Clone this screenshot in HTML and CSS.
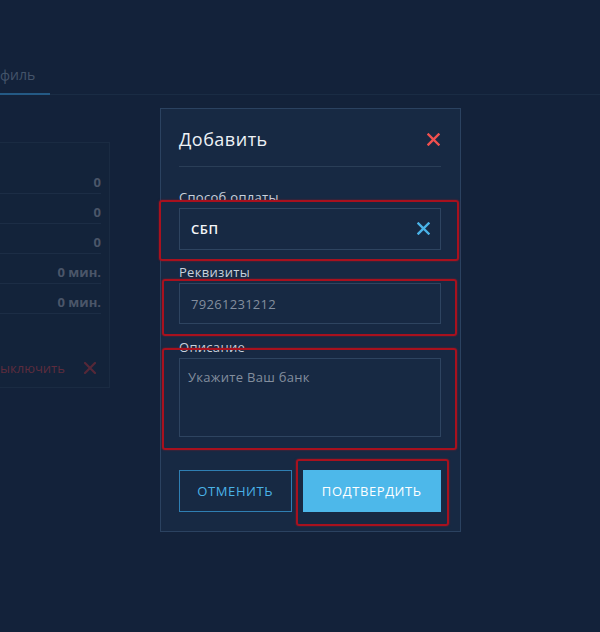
FILE: index.html
```html
<!DOCTYPE html>
<html lang="ru">
<head>
<meta charset="utf-8">
<title>Добавить</title>
<link rel="stylesheet" href="styles.css">
</head>
<body>
<div class="page">
  <div class="tabs">
    <div class="tab active">филь</div>
  </div>
  <div class="panel">
    <div class="row"><span class="val">0</span></div>
    <div class="row"><span class="val">0</span></div>
    <div class="row"><span class="val">0</span></div>
    <div class="row"><span class="val">0 мин.</span></div>
    <div class="row"><span class="val">0 мин.</span></div>
    <div class="off">
      <span class="off-text">ыключить</span>
      <svg class="off-x" width="12" height="12" viewBox="0 0 12 12"><path d="M1 1L11 11M11 1L1 11" stroke="currentColor" stroke-width="2.2" stroke-linecap="square"/></svg>
    </div>
  </div>

  <div class="modal">
    <div class="modal-head">
      <h2 class="modal-title">Добавить</h2>
      <svg class="close" width="13" height="13" viewBox="0 0 13 13"><path d="M1.5 1.5L11.5 11.5M11.5 1.5L1.5 11.5" stroke="currentColor" stroke-width="2.4" stroke-linecap="square"/></svg>
    </div>
    <div class="divider"></div>
    <label class="label first">Способ оплаты</label>
    <div class="input select">
      <span class="value">СБП</span>
      <svg class="clear" width="13" height="13" viewBox="0 0 13 13"><path d="M1.5 1.5L11.5 11.5M11.5 1.5L1.5 11.5" stroke="currentColor" stroke-width="2.4" stroke-linecap="square"/></svg>
    </div>
    <label class="label">Реквизиты</label>
    <div class="input"><span class="muted">79261231212</span></div>
    <label class="label l3">Описание</label>
    <div class="textarea"><span class="muted">Укажите Ваш банк</span></div>
    <div class="actions">
      <button class="btn btn-outline">ОТМЕНИТЬ</button>
      <button class="btn btn-primary">ПОДТВЕРДИТЬ</button>
    </div>

    <div class="hl hl1"></div>
    <div class="hl hl2"></div>
    <div class="hl hl3"></div>
    <div class="hl hl4"></div>
  </div>
</div>
</body>
</html>
```

FILE: styles.css
```css
* { box-sizing: border-box; }
html, body { margin: 0; padding: 0; }
body {
  background: #13223a;
  font-family: "Open Sans", "Noto Sans", sans-serif;
  width: 600px;
  height: 632px;
  overflow: hidden;
}
.page {
  position: relative;
  width: 600px;
  height: 632px;
  background: #13223a;
}
.tabs {
  height: 95px;
  border-bottom: 1px solid #1a2c44;
  display: flex;
  align-items: flex-end;
}
.tab {
  width: 50px;
  height: 30px;
  font-size: 14px;
  color: #44546a;
  border-bottom: 2px solid #245a85;
  line-height: 20px;
  margin-bottom: -1px;
}
.panel {
  margin-top: 47px;
  width: 110px;
  height: 246px;
  border: 1px solid #1a2b42;
  border-left: none;
  background: #13233a;
  padding-top: 21px;
  padding-right: 8px;
}
.row {
  height: 30px;
  border-bottom: 1px solid #1c2d45;
  display: flex;
  justify-content: flex-end;
  align-items: center;
  padding-top: 6px;
  font-size: 13px;
  font-weight: 700;
  color: #4b5669;
}
.off {
  margin-top: 45px;
  display: flex;
  align-items: center;
  justify-content: space-between;
  padding-right: 5px;
}
.off-text { font-size: 13px; color: #5d2c3d; }
.off-x { color: #552838; }

.modal {
  position: absolute;
  left: 160px;
  top: 108px;
  width: 301px;
  height: 424px;
  background: #172943;
  border: 1px solid #2b4260;
  padding: 18px 19px 19px 18px;
  display: flex;
  flex-direction: column;
}
.modal-head {
  display: flex;
  align-items: center;
  justify-content: space-between;
  height: 24px;
  padding-right: 1px;
}
.modal-title {
  margin: 0;
  font-size: 18px;
  font-weight: 500;
  color: #eef2f6;
  letter-spacing: 0.5px;
  line-height: 24px;
}
.close { color: #f0504f; }
.divider {
  margin-top: 15px;
  height: 1px;
  background: #2a3e57;
}
.label {
  display: block;
  margin-top: 14px;
  height: 16px;
  line-height: 16px;
  font-size: 13px;
  color: #c9d1dc;
  letter-spacing: 0.3px;
}
.label.first { margin-top: 22px; }
.input {
  margin-top: 3px;
  height: 42px;
  border: 1px solid #2e4460;
  display: flex;
  align-items: center;
  padding: 0 10px 0 11px;
}
.input + .label { margin-top: 14px; }
.input + .label.l3 { margin-top: 15px; }
.select { justify-content: space-between; }
.value {
  font-size: 13px;
  font-weight: 600;
  color: #f4f6f9;
  letter-spacing: 0.6px;
}
.clear { color: #4ab3e8; }
.muted {
  font-size: 13px;
  color: #838e9e;
  letter-spacing: 0.3px;
}
.textarea {
  margin-top: 3px;
  height: 79px;
  border: 1px solid #2e4460;
  padding: 6px 8px;
}
.actions {
  margin-top: 33px;
  display: flex;
  gap: 11px;
}
.btn {
  height: 42px;
  font-family: inherit;
  font-size: 13px;
  font-weight: 500;
  letter-spacing: 0.6px;
  cursor: pointer;
}
.btn-outline {
  width: 113px;
  background: transparent;
  border: 1px solid #2f7fb3;
  color: #4ab3e8;
}
.btn-primary {
  width: 139px;
  background: #4db8ea;
  border: none;
  color: #ffffff;
}
.hl {
  position: absolute;
  border: 2px solid #a8111e;
  border-radius: 3px;
  box-shadow: 0 0 2px rgba(200, 20, 30, 0.6);
  pointer-events: none;
}
.hl1 { left: -2px; top: 91px; width: 300px; height: 61px; }
.hl2 { left: 1px; top: 170px; width: 295px; height: 57px; }
.hl3 { left: 1px; top: 239px; width: 295px; height: 102px; }
.hl4 { left: 135px; top: 350px; width: 153px; height: 67px; }
```
